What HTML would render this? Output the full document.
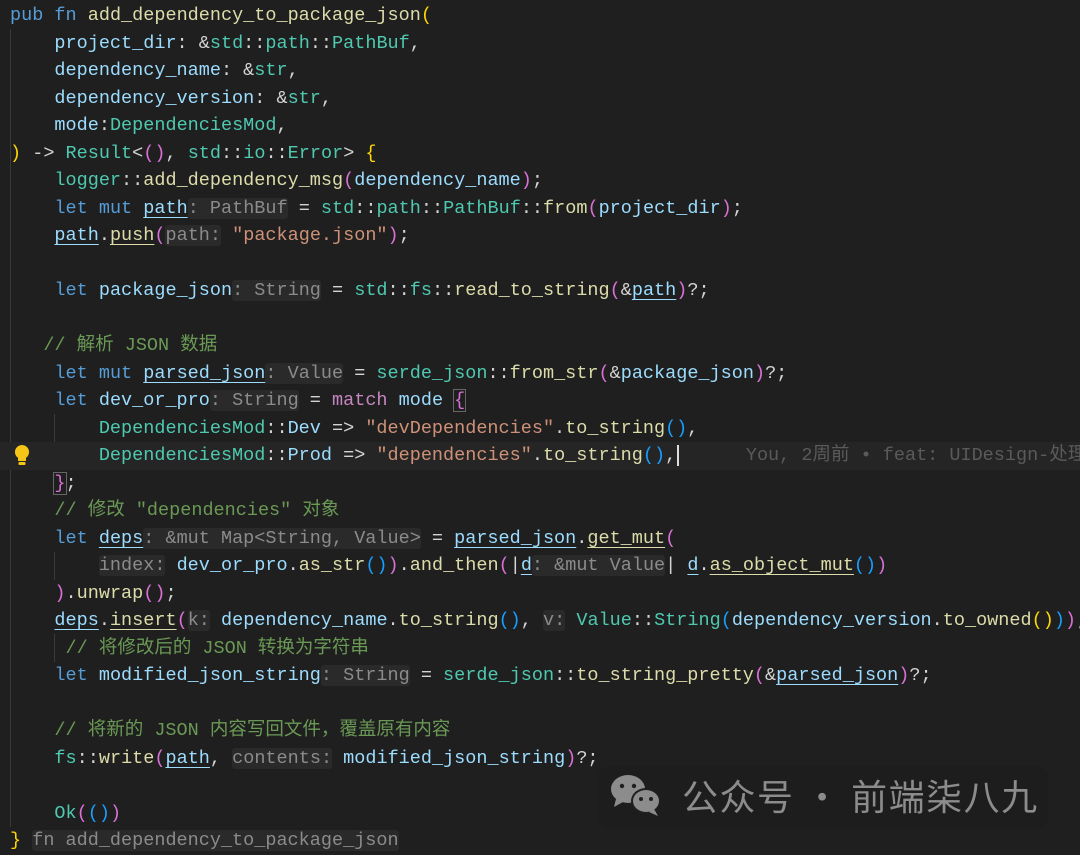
<!DOCTYPE html>
<html><head><meta charset="utf-8"><style>
html,body{margin:0;padding:0;background:#1f1f1f;width:1080px;height:853px;overflow:hidden}
#code{position:absolute;left:10px;top:2px;font-family:"Liberation Mono","Noto Sans CJK SC",monospace;font-size:18.5px;line-height:27.5px;color:#d4d4d4}
.l{height:27.5px;white-space:pre}
.k{color:#569cd6}.f{color:#dcdcaa}.v{color:#9cdcfe}.t{color:#4ec9b0}.s{color:#ce9178}.c{color:#6a9955}
.p1{color:#ffd700}.p2{color:#da70d6}.p3{color:#179fff}.m{color:#c586c0}
.h{color:#8b8b8b;background:#2a2a2a;border-radius:3px}
.u{text-decoration:underline;text-underline-offset:4px}
.g{position:absolute;width:1px;background:#3a3a3a}
</style></head><body>
<div class="g" style="left:10px;top:29px;height:798px"></div>
<div class="g" style="left:54px;top:414px;height:55px"></div>
<div class="g" style="left:54px;top:552px;height:28px"></div>
<div class="g" style="left:54px;top:634px;height:28px"></div>
<div style="position:absolute;left:0;top:442px;width:1080px;height:28px;background:#252525"></div>
<div id="code"><div class="l"><span class="k">pub</span> <span class="k">fn</span> <span class="f">add_dependency_to_package_json</span><span class="p1">(</span></div><div class="l">    <span class="v">project_dir</span>: &amp;<span class="t">std</span>::<span class="t">path</span>::<span class="t">PathBuf</span>,</div><div class="l">    <span class="v">dependency_name</span>: &amp;<span class="t">str</span>,</div><div class="l">    <span class="v">dependency_version</span>: &amp;<span class="t">str</span>,</div><div class="l">    <span class="v">mode</span>:<span class="t">DependenciesMod</span>,</div><div class="l"><span class="p1">)</span> -&gt; <span class="t">Result</span>&lt;<span class="p2">()</span>, <span class="t">std</span>::<span class="t">io</span>::<span class="t">Error</span>&gt; <span class="p1">{</span></div><div class="l">    <span class="t">logger</span>::<span class="f">add_dependency_msg</span><span class="p2">(</span><span class="v">dependency_name</span><span class="p2">)</span>;</div><div class="l">    <span class="k">let</span> <span class="k">mut</span> <span class="v u">path</span><span class="h">: PathBuf</span> = <span class="t">std</span>::<span class="t">path</span>::<span class="t">PathBuf</span>::<span class="f">from</span><span class="p2">(</span><span class="v">project_dir</span><span class="p2">)</span>;</div><div class="l">    <span class="v u">path</span>.<span class="f u">push</span><span class="p2">(</span><span class="h">path:</span> <span class="s">"package.json"</span><span class="p2">)</span>;</div><div class="l"> </div><div class="l">    <span class="k">let</span> <span class="v">package_json</span><span class="h">: String</span> = <span class="t">std</span>::<span class="t">fs</span>::<span class="f">read_to_string</span><span class="p2">(</span>&amp;<span class="v u">path</span><span class="p2">)</span>?;</div><div class="l"> </div><div class="l">   <span class="c">// 解析 JSON 数据</span></div><div class="l">    <span class="k">let</span> <span class="k">mut</span> <span class="v u">parsed_json</span><span class="h">: Value</span> = <span class="t">serde_json</span>::<span class="f">from_str</span><span class="p2">(</span>&amp;<span class="v">package_json</span><span class="p2">)</span>?;</div><div class="l">    <span class="k">let</span> <span class="v">dev_or_pro</span><span class="h">: String</span> = <span class="m">match</span> <span class="v">mode</span> <span class="p2" style="outline:1px solid #666">{</span></div><div class="l">        <span class="t">DependenciesMod</span>::<span class="v">Dev</span> =&gt; <span class="s">"devDependencies"</span>.<span class="f">to_string</span><span class="p3">()</span>,</div><div class="l">        <span class="t">DependenciesMod</span>::<span class="v">Prod</span> =&gt; <span class="s">"dependencies"</span>.<span class="f">to_string</span><span class="p3">()</span>,<span style="border-left:2px solid #ddd;margin-left:1px"></span>      <span style="color:#5a5a5a">You, 2周前 • feat: UIDesign-处理</span></div><div class="l">    <span class="p2" style="outline:1px solid #666">}</span>;</div><div class="l">    <span class="c">// 修改 "dependencies" 对象</span></div><div class="l">    <span class="k">let</span> <span class="v u">deps</span><span class="h">: &amp;mut Map&lt;String, Value&gt;</span> = <span class="v u">parsed_json</span>.<span class="f u">get_mut</span><span class="p2">(</span></div><div class="l">        <span class="h">index:</span> <span class="v">dev_or_pro</span>.<span class="f">as_str</span><span class="p3">()</span><span class="p2">)</span>.<span class="f">and_then</span><span class="p2">(</span>|<span class="v u">d</span><span class="h">: &amp;mut Value</span>| <span class="v u">d</span>.<span class="f u">as_object_mut</span><span class="p3">()</span><span class="p2">)</span></div><div class="l">    <span class="p2">)</span>.<span class="f">unwrap</span><span class="p2">()</span>;</div><div class="l">    <span class="v u">deps</span>.<span class="f u">insert</span><span class="p2">(</span><span class="h">k:</span> <span class="v">dependency_name</span>.<span class="f">to_string</span><span class="p3">()</span>, <span class="h">v:</span> <span class="t">Value</span>::<span class="t">String</span><span class="p3">(</span><span class="v">dependency_version</span>.<span class="f">to_owned</span><span class="p1">()</span><span class="p3">)</span><span class="p2">)</span>;</div><div class="l">     <span class="c">// 将修改后的 JSON 转换为字符串</span></div><div class="l">    <span class="k">let</span> <span class="v">modified_json_string</span><span class="h">: String</span> = <span class="t">serde_json</span>::<span class="f">to_string_pretty</span><span class="p2">(</span>&amp;<span class="v u">parsed_json</span><span class="p2">)</span>?;</div><div class="l"> </div><div class="l">    <span class="c">// 将新的 JSON 内容写回文件，覆盖原有内容</span></div><div class="l">    <span class="t">fs</span>::<span class="f">write</span><span class="p2">(</span><span class="v u">path</span>, <span class="h">contents:</span> <span class="v">modified_json_string</span><span class="p2">)</span>?;</div><div class="l"> </div><div class="l">    <span class="t">Ok</span><span class="p2">(</span><span class="p3">()</span><span class="p2">)</span></div><div class="l"><span class="p1">}</span> <span class="h">fn add_dependency_to_package_json</span></div></div>
<div style="position:absolute;left:12px;top:444px;width:20px;height:24px">
<svg width="20" height="24" viewBox="0 0 20 24"><path d="M10 1a7 7 0 0 0-4 12.8V17h8v-3.2A7 7 0 0 0 10 1z" fill="#f5c518"/><rect x="6.5" y="18" width="7" height="3" rx="1" fill="#f5c518"/></svg>
</div>
<div style="position:absolute;left:598px;top:766px;width:450px;height:62px;background:#1d1d1d;border-radius:12px"></div>
<svg style="position:absolute;left:608px;top:771px" width="58" height="48" viewBox="0 0 58 48">
<ellipse cx="20" cy="18" rx="17" ry="14" fill="#8c8c8c"/><path d="M8 28l-2 8 9-5z" fill="#8c8c8c"/>
<circle cx="14" cy="15" r="2.2" fill="#1f1f1f"/><circle cx="26" cy="15" r="2.2" fill="#1f1f1f"/>
<ellipse cx="38" cy="30" rx="15" ry="13" fill="#1f1f1f"/>
<ellipse cx="38" cy="30" rx="13" ry="11" fill="#8c8c8c"/><path d="M46 38l4 7-9-4z" fill="#8c8c8c"/>
<circle cx="33" cy="28" r="2" fill="#1f1f1f"/><circle cx="43" cy="28" r="2" fill="#1f1f1f"/>
</svg>
<div style="position:absolute;left:682px;top:771px;font-family:'Noto Sans CJK SC',sans-serif;font-size:36px;line-height:48px;letter-spacing:1.5px;color:#8c8c8c;white-space:nowrap">公众号 · 前端柒八九</div>
</body></html>
